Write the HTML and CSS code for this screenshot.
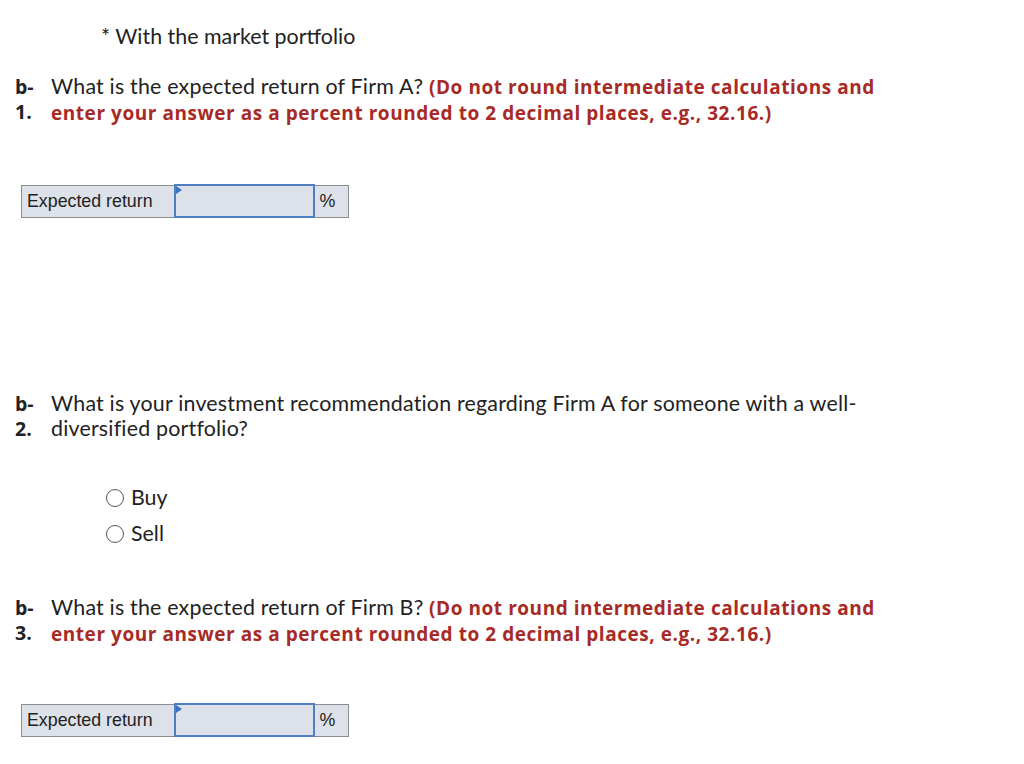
FILE: index.html
```html
<!DOCTYPE html>
<html>
<head>
<meta charset="utf-8">
<link rel="stylesheet" href="styles.css">
</head>
<body>
<div class="page">
  <p class="intro">* With the market portfolio</p>

  <div class="question q1">
    <div class="qnum">b-<br>1.</div>
    <div class="qtext">What is the expected return of Firm A? <span class="hint">(Do not round intermediate calculations and enter your answer as a percent rounded to 2 decimal places, e.g., 32.16.)</span></div>
  </div>

  <table class="answer a1">
    <tr>
      <td class="label">Expected return</td>
      <td class="input"><span class="flag"></span></td>
      <td class="unit">%</td>
    </tr>
  </table>

  <div class="question q2">
    <div class="qnum">b-<br>2.</div>
    <div class="qtext">What is your investment recommendation regarding Firm A for someone with a well-diversified portfolio?</div>
  </div>

  <div class="options">
    <label class="option"><span class="radio"></span>Buy</label>
    <label class="option"><span class="radio"></span>Sell</label>
  </div>

  <div class="question q3">
    <div class="qnum">b-<br>3.</div>
    <div class="qtext">What is the expected return of Firm B? <span class="hint">(Do not round intermediate calculations and enter your answer as a percent rounded to 2 decimal places, e.g., 32.16.)</span></div>
  </div>

  <table class="answer a3">
    <tr>
      <td class="label">Expected return</td>
      <td class="input"><span class="flag"></span></td>
      <td class="unit">%</td>
    </tr>
  </table>
</div>
</body>
</html>
```

FILE: styles.css
```css
html, body {
  margin: 0;
  padding: 0;
  background: #fff;
}
body {
  font-family: "Lato", "Open Sans", sans-serif;
  color: #222;
  font-size: 21.4px;
}
.page {
  padding: 0 0 0 15px;
}
.intro {
  margin: 0;
  padding-top: 24px;
  padding-left: 86px;
  line-height: 25px;
}
.question {
  display: flex;
  line-height: 25px;
  width: 868px;
}
.q1 { margin-top: 25px; }
.q2 { margin-top: 173px; }
.q3 { margin-top: 49px; }
.qnum {
  width: 36px;
  flex: none;
  font-family: "Open Sans", sans-serif;
  font-size: 19.5px;
  font-weight: 700;
}
.qtext {
  flex: 1;
  letter-spacing: 0.2px;
}
.hint {
  color: #a72a26;
  font-family: "Open Sans", sans-serif;
  font-size: 19px;
  letter-spacing: 0.55px;
  font-weight: 700;
}
.answer {
  border-collapse: collapse;
  margin-left: 6px;
  font-family: "Liberation Sans", Arial, sans-serif;
  font-size: 17.8px;
  color: #222;
}
.a1 { margin-top: 58px; }
.a3 { margin-top: 56px; }
.answer td {
  background: #dde1ea;
  border: 1px solid #8c8c8c;
  height: 32px;
  padding: 0;
  box-sizing: border-box;
}
.answer .label {
  width: 153px;
  padding-left: 5px;
}
.answer .input {
  width: 139px;
  border: 2px solid #4f7ec1;
  position: relative;
}
.flag {
  position: absolute;
  left: 0;
  top: 0;
  width: 0;
  height: 0;
  border-top: 4px solid transparent;
  border-bottom: 4px solid transparent;
  border-left: 6px solid #3b73c4;
}
.answer .unit {
  width: 35px;
  padding-left: 5px;
}
.options {
  margin-top: 44px;
  padding-left: 91px;
  display: flex;
  flex-direction: column;
  gap: 11px;
}
.option {
  display: flex;
  align-items: center;
  line-height: 25px;
}
.radio {
  width: 18px;
  height: 18px;
  border: 1.5px solid #555;
  border-radius: 50%;
  margin-right: 7px;
  box-sizing: border-box;
}
```
